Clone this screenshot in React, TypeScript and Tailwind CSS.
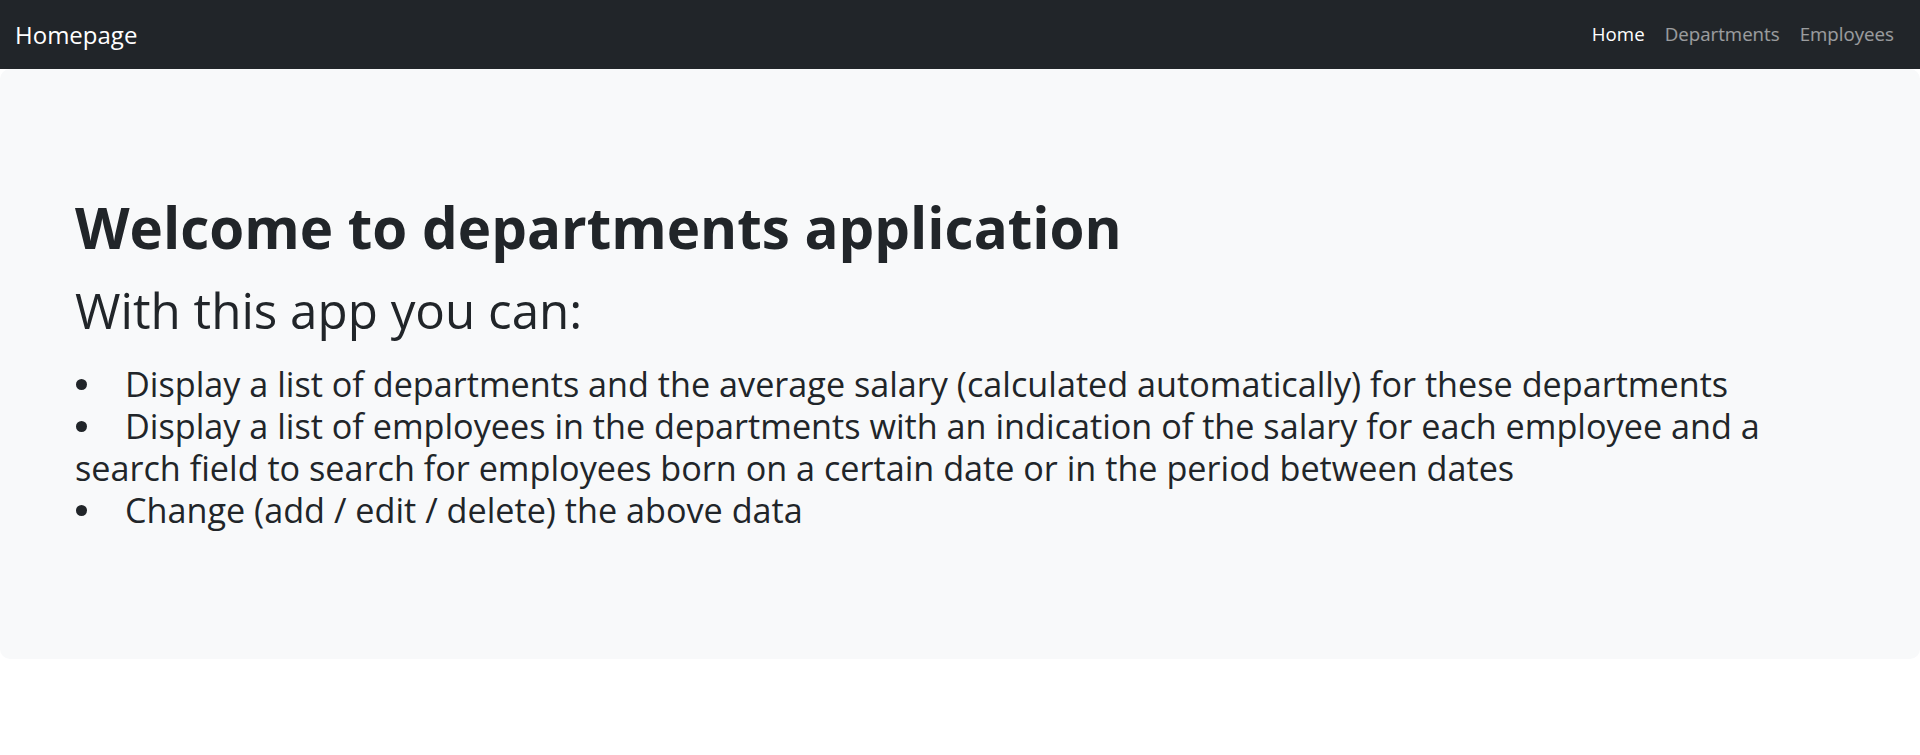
import React from "react";

const font = { fontFamily: '"Open Sans", "Noto Sans", Arial, sans-serif' };

function Bullet() {
  return (
    <span className="inline-block w-[11px] h-[11px] rounded-full bg-[#212529] ml-[1px] mr-[38px] align-[6.5px]" />
  );
}

export default function App() {
  return (
    <div className="min-h-[755px] bg-white text-[#212529]" style={font}>
      <nav className="h-[69px] bg-[#212529] flex items-center justify-between pl-[15px] pr-[16px]">
        <a className="text-white text-[24px] leading-none">Homepage</a>
        <ul className="flex items-center text-[18.7px] leading-none">
          <li><a className="px-[10px] text-white">Home</a></li>
          <li><a className="px-[10px] text-white/55">Departments</a></li>
          <li><a className="px-[10px] text-white/55">Employees</a></li>
        </ul>
      </nav>
      <div className="bg-[#f8f9fa] rounded-[10px] pt-[125.6px] pb-[128px] pl-[75px] pr-[74px]">
        <h1 className="text-[56.5px] leading-[66px] font-bold">Welcome to departments application</h1>
        <h2 className="mt-[20.8px] text-[49.3px] leading-[58px] font-normal">With this app you can:</h2>
        <ul className="mt-[23.4px] text-[34.2px] leading-[42px]">
          <li><Bullet />Display a list of departments and the average salary (calculated automatically) for these departments</li>
          <li><Bullet />Display a list of employees in the departments with an indication of the salary for each employee and a<br />search field to search for employees born on a certain date or in the period between dates</li>
          <li><Bullet />Change (add / edit / delete) the above data</li>
        </ul>
      </div>
    </div>
  );
}
